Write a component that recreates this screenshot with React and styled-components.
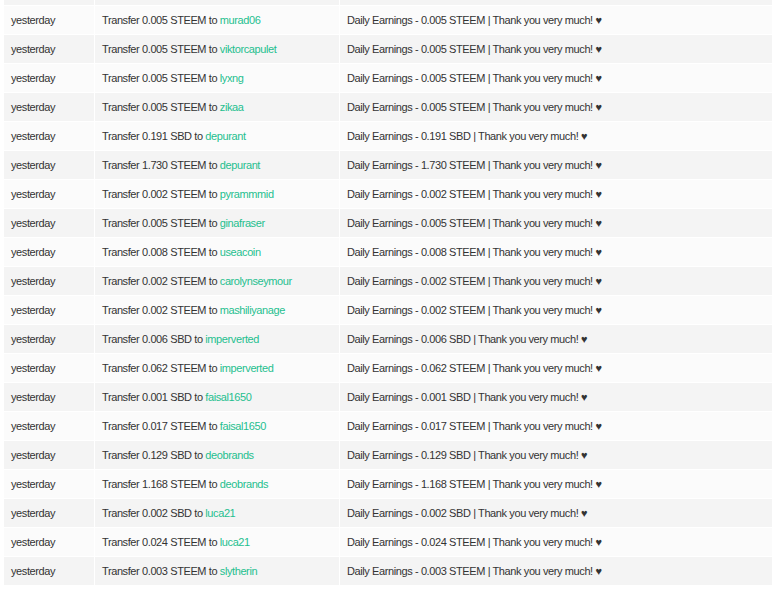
import React from "react";
import styled, { createGlobalStyle } from "styled-components";

const G = createGlobalStyle`
  body { margin: 0; background: #fff; overflow: hidden; font-family: "Liberation Sans", Arial, sans-serif; }
`;
const Table = styled.div`
  margin-top: -23px;
  margin-left: 4px;
  width: 772px;
  display: grid;
  grid-template-columns: 90px 244px 1fr;
  column-gap: 1px;
  row-gap: 1px;
  background: #fff;
`;
const Cell = styled.div`
  height: 28px;
  line-height: 28px;
  padding-left: 7px;
  font-size: 11px;
  letter-spacing: -0.4px;
  color: #333;
  white-space: nowrap;
  background: ${p => (p.$alt ? "#f4f4f4" : "#fbfbfb")};
`;
const Link = styled.span` color: #1fbf8f; `;

const data = [
  ["0.005 STEEM","murad06"],["0.005 STEEM","viktorcapulet"],["0.005 STEEM","lyxng"],["0.005 STEEM","zikaa"],
  ["0.191 SBD","depurant"],["1.730 STEEM","depurant"],["0.002 STEEM","pyrammmid"],["0.005 STEEM","ginafraser"],
  ["0.008 STEEM","useacoin"],["0.002 STEEM","carolynseymour"],["0.002 STEEM","mashiliyanage"],["0.006 SBD","imperverted"],
  ["0.062 STEEM","imperverted"],["0.001 SBD","faisal1650"],["0.017 STEEM","faisal1650"],["0.129 SBD","deobrands"],
  ["1.168 STEEM","deobrands"],["0.002 SBD","luca21"],["0.024 STEEM","luca21"],["0.003 STEEM","slytherin"],
];

export default function App() {
  return (
    <>
      <G />
      <Table>
        <Cell $alt /><Cell $alt /><Cell $alt />
        {data.map(([amt, who], i) => {
          const alt = i % 2 === 1;
          return (
            <React.Fragment key={i}>
              <Cell $alt={alt}>yesterday</Cell>
              <Cell $alt={alt}>Transfer {amt} to <Link>{who}</Link></Cell>
              <Cell $alt={alt}>Daily Earnings - {amt} | Thank you very much! ♥</Cell>
            </React.Fragment>
          );
        })}
      </Table>
    </>
  );
}
